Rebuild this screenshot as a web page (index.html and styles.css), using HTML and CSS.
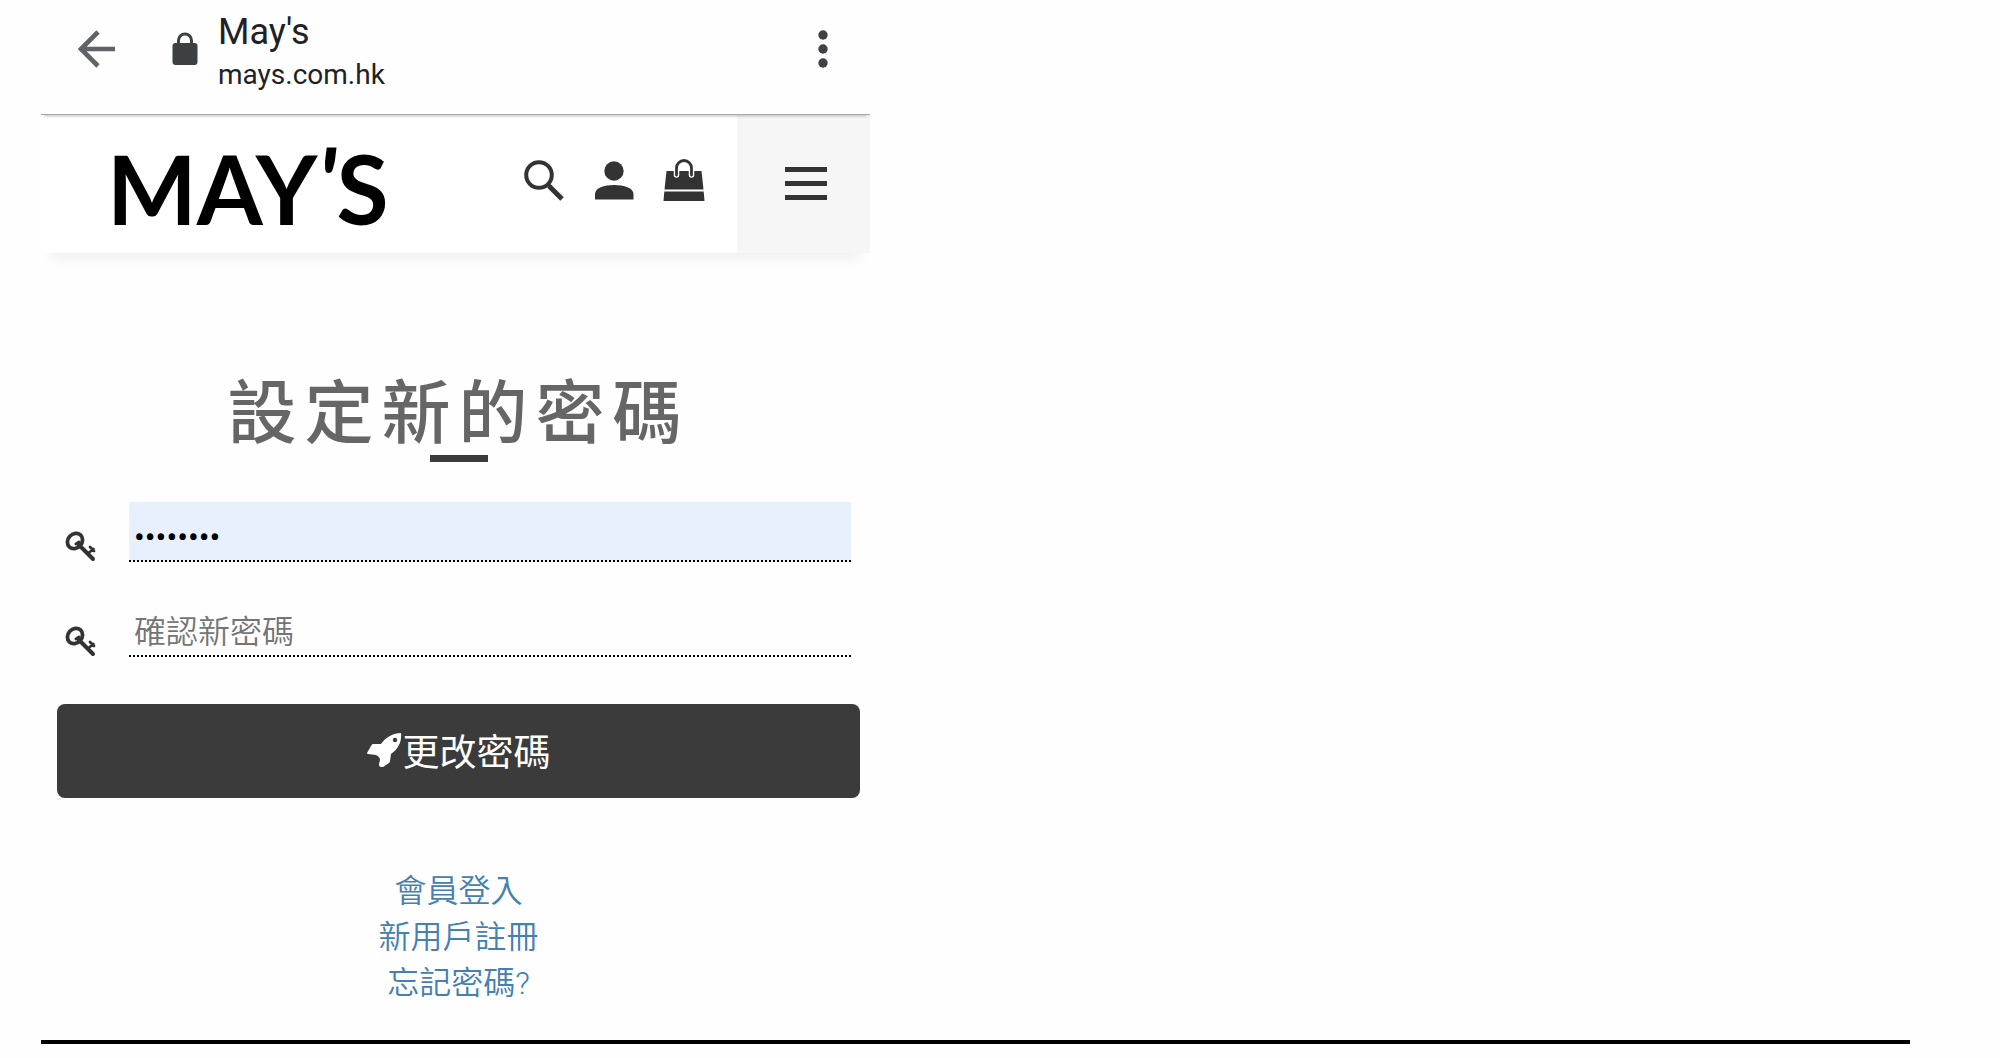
FILE: index.html
```html
<!DOCTYPE html>
<html lang="zh-Hant">
<head>
    <meta charset="UTF-8">
    <meta name="viewport" content="width=device-width, initial-scale=1.0">
    <title>May's</title>
    <link rel="stylesheet" href="styles.css">
</head>
<body>
    <div class="page">
        <div class="screen">
            <!-- Browser bar -->
            <div class="browser-bar">
                <button type="button" class="icon-btn back-btn" aria-label="返回">
                    <svg width="38" height="38" viewBox="0 0 38 38"><path d="M20 2L3 19l17 17M3 19h34" fill="none" stroke="#5f6267" stroke-width="4.600"/></svg>
                </button>
                <svg class="lock" width="26" height="34" viewBox="0 0 26 34"><rect x="0.5" y="11" width="25" height="22" rx="3" fill="#3c4043"/><path d="M6.500 13V8.500a6.500 6.500 0 0 1 13 0V13" fill="none" stroke="#3c4043" stroke-width="3"/></svg>
                <div class="site-info">
                    <div class="site-title">May's</div>
                    <div class="site-url">mays.com.hk</div>
                </div>
                <button type="button" class="icon-btn more-btn" aria-label="更多">
                    <svg width="10" height="38" viewBox="0 0 10 38" fill="#404045"><circle cx="5" cy="5" r="4.700"/><circle cx="5" cy="19" r="4.700"/><circle cx="5" cy="33" r="4.700"/></svg>
                </button>
            </div>

            <!-- Shop header -->
            <header class="shop-header">
                <a href="#" class="logo">MAY<span class="logo-mark">'</span>S</a>
                <nav class="tools">
                    <a href="#" aria-label="搜尋">
                        <svg width="42" height="42" viewBox="0 0 42 42" fill="none" stroke="#333"><circle cx="16" cy="16" r="12.800" stroke-width="4"/><path d="M26 27l13 13" stroke-width="5"/><path d="M24.500 24.500l4 4" stroke-width="3"/></svg>
                    </a>
                    <a href="#" aria-label="會員">
                        <svg width="42" height="42" viewBox="0 0 42 42" fill="#333"><circle cx="21" cy="12" r="9.700"/><path d="M2 40.500V35C2 29 11 26 21 26s19.500 3 19.500 9v5.500z"/></svg>
                    </a>
                    <a href="#" aria-label="購物袋">
                        <svg width="42" height="42" viewBox="0 0 42 42"><path d="M3.500 12h35l2 18.500H1.500z" fill="#333"/><path d="M1.300 32.500h39.400l.8 9.500H.5z" fill="#333"/><path d="M13.500 16V9a7.500 7.500 0 0 1 15 0v7" fill="none" stroke="#fff" stroke-width="5.500" stroke-linecap="round"/><path d="M13.500 16V9a7.500 7.500 0 0 1 15 0v7" fill="none" stroke="#333" stroke-width="2.800" stroke-linecap="round"/></svg>
                    </a>
                </nav>
                <button type="button" class="menu-btn" aria-label="選單">
                    <svg width="42" height="34" viewBox="0 0 42 34" fill="#333"><path d="M0 0h42v5H0zM0 14h42v5H0zM0 28h42v5H0z"/></svg>
                </button>
            </header>

            <main class="content">
                <h1 class="title">設定新的密碼</h1>
                <form>
                    <div class="field">
                        <label for="new-password" aria-label="新密碼">
                            <svg class="key" width="32" height="32" viewBox="0 0 32 32" fill="none" stroke="#333" stroke-linecap="round"><ellipse cx="10" cy="11" rx="7" ry="8.200" transform="rotate(42 10 11)" stroke-width="3.800"/><path d="M11 14l3-2" stroke-width="3"/><path d="M14 15l14 14" stroke-width="4"/><path d="M23.500 23l5-4M25 17l4 4" stroke-width="2.800"/></svg>
                        </label>
                        <input type="password" id="new-password" class="filled" value="password">
                    </div>
                    <div class="field">
                        <label for="confirm-password" aria-label="確認新密碼">
                            <svg class="key" width="32" height="32" viewBox="0 0 32 32" fill="none" stroke="#333" stroke-linecap="round"><ellipse cx="10" cy="11" rx="7" ry="8.200" transform="rotate(42 10 11)" stroke-width="3.800"/><path d="M11 14l3-2" stroke-width="3"/><path d="M14 15l14 14" stroke-width="4"/><path d="M23.500 23l5-4M25 17l4 4" stroke-width="2.800"/></svg>
                        </label>
                        <input type="password" id="confirm-password" placeholder="確認新密碼">
                    </div>
                    <button type="submit" class="submit-btn">
                        <svg width="36" height="36" viewBox="0 0 36 36"><path d="M34 1C26 1 19 5 14 12H6q-1 0-2 2L0 21q0 1 1 1l8 1q4 2 4 5l-1 4q0 3 2 3h2l6-4q1-1 1-2l1-7C31 17 35 10 34 1z" fill="#fff"/><circle cx="28" cy="8" r="2.200" fill="#3b3b3b"/></svg>
                        <span>更改密碼</span>
                    </button>
                </form>
                <div class="links">
                    <a href="#">會員登入</a>
                    <a href="#">新用戶註冊</a>
                    <a href="#">忘記密碼?</a>
                </div>
            </main>
        </div>
        <hr class="divider">
    </div>
</body>
</html>
```
FILE: styles.css
```css
* {
    box-sizing: border-box;
}

body {
    margin: 0;
    font-family: Roboto, "Noto Sans CJK TC", sans-serif;
    background-color: #fefefe;
    color: #333;
}

svg {
    display: block;
}

button {
    border: none;
    padding: 0;
    background: none;
    font-family: inherit;
    cursor: pointer;
}

.page {
    padding: 0 90px 0 41px;
}

.screen {
    max-width: 829px;
}

/* Browser bar */
.browser-bar {
    display: flex;
    align-items: center;
    height: 115px;
    padding: 0 42px 16px 37px;
    border-bottom: 1px solid #a8a8a8;
    box-shadow: 0 4px 3px -3px rgba(0, 0, 0, 0.25);
    position: relative;
}

.lock {
    margin-left: 56px;
}

.site-info {
    margin-left: 20px;
    padding-top: 8px;
    color: #202124;
}

.site-title {
    font-size: 36px;
    line-height: 44px;
}

.site-url {
    font-size: 28px;
    line-height: 42px;
}

.more-btn {
    margin-left: auto;
}

/* Shop header */
.shop-header {
    display: flex;
    align-items: center;
    height: 138px;
    padding-left: 66px;
    background-color: #fff;
    box-shadow: 0 16px 12px -10px rgba(0, 0, 0, 0.06);
}

.logo {
    font-family: Lato, sans-serif;
    font-size: 95px;
    font-weight: 700;
    line-height: 1;
    color: #000;
    text-decoration: none;
}

.logo-mark {
    font-style: italic;
    vertical-align: 8px;
}

.tools {
    display: flex;
    gap: 28px;
    margin-left: auto;
    margin-right: 32px;
    padding-bottom: 8px;
}

.menu-btn {
    display: flex;
    align-items: center;
    justify-content: center;
    width: 133px;
    height: 100%;
    padding-left: 5px;
    background-color: #f6f6f6;
}

/* Form */
.content {
    padding: 122px 10px 0 16px;
}

.title {
    margin: 0 0 40px;
    font-size: 69px;
    font-weight: 500;
    line-height: 80px;
    letter-spacing: 8px;
    text-align: center;
    color: #666;
}

.title::after {
    content: "";
    display: block;
    width: 58px;
    height: 7px;
    margin: 0 auto;
    background-color: #3b3b3b;
}

.field {
    display: flex;
    align-items: flex-end;
    gap: 32px;
    margin: 0 9px 35px 8px;
}

.field input {
    flex: 1;
    min-width: 0;
    height: 60px;
    padding: 12px 5px 0;
    border: none;
    border-bottom: 2px dotted #000;
    border-radius: 0;
    outline: none;
    background: transparent;
    font-family: inherit;
    font-size: 32px;
    color: #000;
}

.field input.filled {
    background-color: #e8f0fe;
}

.field input::placeholder {
    font-weight: 350;
    color: #757575;
}

.submit-btn {
    display: flex;
    align-items: center;
    justify-content: center;
    width: 100%;
    height: 94px;
    margin-top: 47px;
    padding-bottom: 2px;
    border-radius: 8px;
    background-color: #3b3b3b;
    color: #fff;
    font-size: 37px;
}

.links {
    display: flex;
    flex-direction: column;
    align-items: center;
    margin-top: 70px;
    font-size: 32px;
    font-weight: 350;
    line-height: 46px;
}

.links a {
    color: #4480b0;
    text-decoration: none;
}

.divider {
    height: 4px;
    margin: 34px 0 0;
    border: none;
    background-color: #000;
}
```
